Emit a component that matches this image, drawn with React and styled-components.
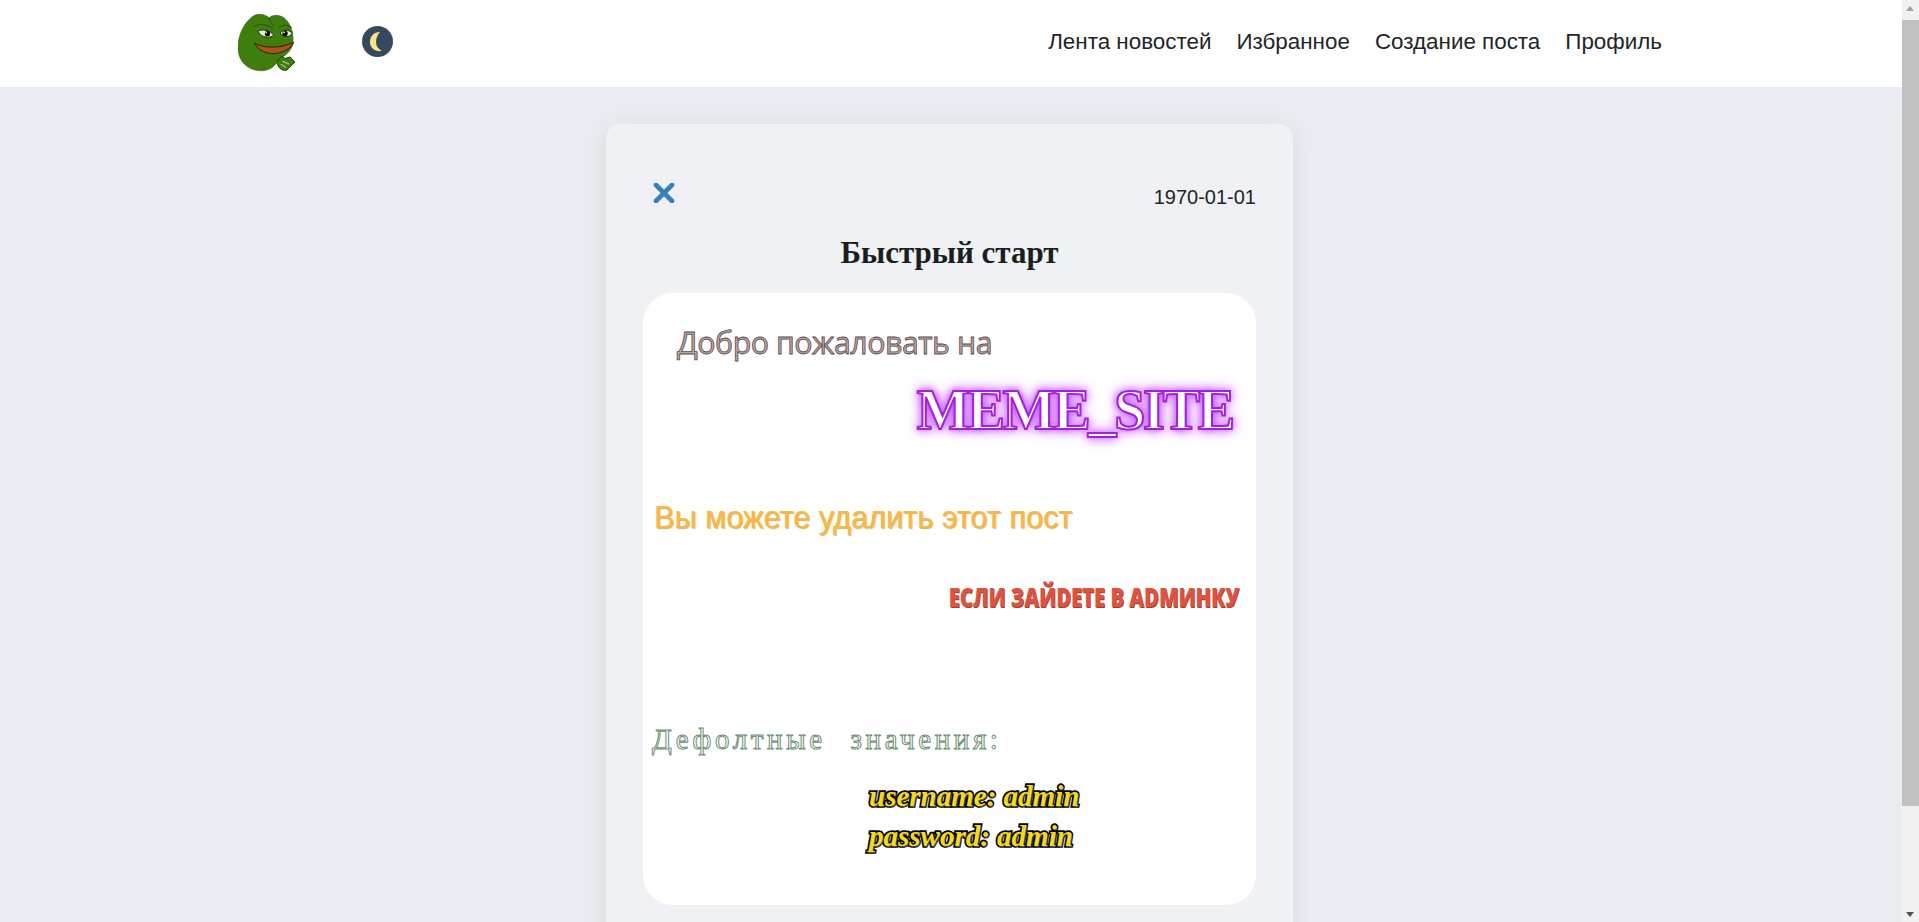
import React from 'react'
import styled, {createGlobalStyle} from 'styled-components'

const GlobalStyle = createGlobalStyle`
    body{
        margin: 0;
        padding-right: 17px;
        background-color: #e9ecf1;
        font-family: "Liberation Sans", Arial, sans-serif;
        color: #212529;
    }
`

const Header = styled.header`
    background-color: #ffffff;
    height: 87px;
`
const HeaderInner = styled.div`
    width: 1426px;
    height: 100%;
    margin: 0 auto;
    padding-right: 2px;
    box-sizing: border-box;
    display: flex;
    align-items: center;
    justify-content: space-between;
`
const Brand = styled.div`
    display: flex;
    align-items: center;
    gap: 67px;
    margin-bottom: 3px;
`
const Toggle = styled.button`
    width: 31px;
    height: 31px;
    padding: 0;
    margin-bottom: 1px;
    border: none;
    border-radius: 50%;
    background-color: #34495e;
    display: flex;
    align-items: center;
    justify-content: center;
`
const Nav = styled.nav`
    display: flex;
    gap: 25px;
    margin-bottom: 3px;
`
const NavLink = styled.a`
    font-size: 22.4px;
    color: #212529;
    text-decoration: none;
`

const Main = styled.main`
    padding: 37px 3px 40px 0;
    display: flex;
    justify-content: center;
`
const Card = styled.article`
    width: 687px;
    box-sizing: border-box;
    padding: 52px 37px 37px;
    background-color: #eff1f5;
    border-radius: 14px;
    box-shadow: 0 4px 24px rgba(0, 0, 0, 0.08);
`
const CardTop = styled.div`
    display: flex;
    justify-content: space-between;
    align-items: flex-start;
    height: 50px;
    padding-left: 10px;
`
const Close = styled.button`
    padding: 0;
    margin-top: 7px;
    border: none;
    background: none;
    display: flex;
`
const PostDate = styled.time`
    font-size: 20px;
    line-height: 24px;
    margin-top: 9px;
`
const Title = styled.h2`
    margin: 9px 0 22px;
    font-family: "Liberation Serif", "Times New Roman", serif;
    font-size: 31px;
    line-height: 36px;
    font-weight: 700;
    text-align: center;
    color: #1b1e21;
`
const Content = styled.div`
    height: 612px;
    box-sizing: border-box;
    background-color: #ffffff;
    border-radius: 30px;
    display: flex;
    flex-direction: column;
`
const Line = styled.p`
    margin: 0;
    height: ${p => p.$height}px;
    line-height: ${p => p.$height}px;
    margin-top: ${p => p.$top || 0}px;
    padding: ${p => p.$pad || '0'};
    text-align: ${p => p.$align || 'left'};
    white-space: nowrap;
`
const Welcome = styled.span`
    font-family: "Open Sans", sans-serif;
    font-size: 30.4px;
    letter-spacing: -0.5px;
    color: #b9a79e;
    -webkit-text-stroke: 0.8px #5c4a50;
`
const Neon = styled.span`
    font-family: "Liberation Serif", serif;
    font-size: 56px;
    font-weight: 700;
    letter-spacing: -2.2px;
    color: #ffffff;
    -webkit-text-stroke: 2px #a321dc;
    text-shadow: 0 0 6px #c44dff, 0 0 12px #c44dff, 0 0 14px #d680ff;
`
const Notice = styled.span`
    font-family: "Liberation Sans", sans-serif;
    font-size: 30.7px;
    color: #f7b84b;
    text-shadow: 1px 1px 1px #e0b060;
`
const Admin = styled.span`
    display: inline-block;
    font-family: "Open Sans", sans-serif;
    font-weight: 800;
    font-size: 27px;
    color: #dc5440;
    text-shadow: 1px 1px 0 #a83a2b;
    transform: scaleX(0.75);
    transform-origin: right center;
`
const Defaults = styled.span`
    font-family: "Liberation Serif", serif;
    font-size: 29px;
    letter-spacing: 3.6px;
    word-spacing: 14px;
    color: #ffffff;
    -webkit-text-stroke: 1px #6d8f70;
`
const Credentials = styled.span`
    font-family: "Liberation Serif", serif;
    font-style: italic;
    font-weight: 700;
    font-size: 29px;
    color: #f7d91a;
    -webkit-text-stroke: 3.5px #000000;
    paint-order: stroke fill;
    text-shadow: 1px 1px 1px #555555;
`

// the reference shows the browser's own scrollbar, drawn here over the page edge
const Scrollbar = styled.div`
    position: fixed;
    top: 0;
    right: 0;
    bottom: 0;
    width: 17px;
    background-color: #f1f1f1;
`
const ScrollArrow = styled.div`
    position: absolute;
    left: 4px;
    ${p => p.$down ? 'bottom: 5px' : 'top: 6px'};
    border-left: 4.5px solid transparent;
    border-right: 4.5px solid transparent;
    ${p => p.$down ? 'border-top: 5px solid #505050' : 'border-bottom: 5px solid #a3a3a3'};
`
const ScrollThumb = styled.div`
    position: absolute;
    top: 20px;
    left: 0;
    right: 0;
    height: 786px;
    background-color: #c1c1c1;
`

const Pepe = () => (
    <svg width="57" height="60" viewBox="18 15 172 180">
        <path d="M62 28C75 18 100 20 112 32C120 22 150 20 165 40C178 55 185 75 184 100C186 115 175 135 160 145L140 160C130 175 120 190 90 192C50 192 15 165 18 115C20 80 38 45 62 28Z" fill="#3f7d0c" stroke="#2a5507" strokeWidth="1.5"/>
        <path d="M66 58C85 48 110 52 125 66M112 32C112 42 118 50 128 56M142 62C152 52 168 52 180 62" fill="none" stroke="#24500a" strokeWidth="3"/>
        <path d="M78 72C90 66 115 68 126 85C115 93 95 92 85 82Z" fill="#e6ebdf" stroke="#1a3006" strokeWidth="3"/>
        <path d="M145 78C155 66 172 68 182 78C175 92 155 92 145 78Z" fill="#e6ebdf" stroke="#1a3006" strokeWidth="3"/>
        <circle cx="107" cy="80" r="8" fill="#111111"/>
        <circle cx="160" cy="79" r="8" fill="#111111"/>
        <circle cx="103" cy="77" r="2.5" fill="#ffffff"/>
        <circle cx="157" cy="76" r="2.5" fill="#ffffff"/>
        <path d="M68 108C90 122 140 128 186 106C182 122 150 142 120 140C95 138 75 126 68 108Z" fill="#a9531f" stroke="#2b2206" strokeWidth="3"/>
        <path d="M135 165L150 148L160 155L175 150L190 165L165 190C150 192 140 185 135 165Z" fill="#3f7d0c" stroke="#1f4205" strokeWidth="3"/>
        <path d="M152 163L172 172M147 172L162 182" stroke="#a7c486" strokeWidth="4"/>
    </svg>
)

const Moon = () => (
    <svg width="19" height="22" viewBox="0 0 19 22">
        <path d="M12 1C6 1 2 5 2 11C2 17 7 21 14 20C10 18 8 15 8 11C8 7 10 3 12 1Z" fill="#f4e58c"/>
    </svg>
)

const CloseIcon = () => (
    <svg width="22" height="20" viewBox="0 0 22 20">
        <path d="M3 2L19 18M19 2L3 18" stroke="#3b7fb8" strokeWidth="4.6" strokeLinecap="round"/>
    </svg>
)

const links = ['Лента новостей', 'Избранное', 'Создание поста', 'Профиль']

const App = () => {
  return (
      <>
        <GlobalStyle/>
        <Header>
            <HeaderInner>
                <Brand>
                    <Pepe/>
                    <Toggle aria-label='theme'><Moon/></Toggle>
                </Brand>
                <Nav>
                    {links.map((link)=> <NavLink key={link} href='#'>{link}</NavLink>)}
                </Nav>
            </HeaderInner>
        </Header>
        <Main>
            <Card>
                <CardTop>
                    <Close aria-label='delete'><CloseIcon/></Close>
                    <PostDate>1970-01-01</PostDate>
                </CardTop>
                <Title>Быстрый старт</Title>
                <Content>
                    <Line $height={40} $top={30} $pad='0 0 0 34px'><Welcome>Добро пожаловать на</Welcome></Line>
                    <Line $height={70} $top={12} $pad='0 23px 0 0' $align='right'><Neon>MEME_SITE</Neon></Line>
                    <Line $height={40} $top={53} $pad='0 0 0 11px'><Notice>Вы можете удалить этот пост</Notice></Line>
                    <Line $height={40} $top={39} $pad='0 17px 0 0' $align='right'><Admin>ЕСЛИ ЗАЙDЕТЕ В ADМИНКУ</Admin></Line>
                    <Line $height={40} $top={102} $pad='0 0 0 9px'><Defaults>Дефолтные значения:</Defaults></Line>
                    <Line $height={40} $top={17} $pad='0 0 0 226px'><Credentials>username: admin</Credentials></Line>
                    <Line $height={40} $pad='0 0 0 226px'><Credentials>password: admin</Credentials></Line>
                </Content>
            </Card>
        </Main>
        <Scrollbar aria-hidden='true'>
            <ScrollArrow/>
            <ScrollThumb/>
            <ScrollArrow $down/>
        </Scrollbar>
      </>
  )
}

export default App
